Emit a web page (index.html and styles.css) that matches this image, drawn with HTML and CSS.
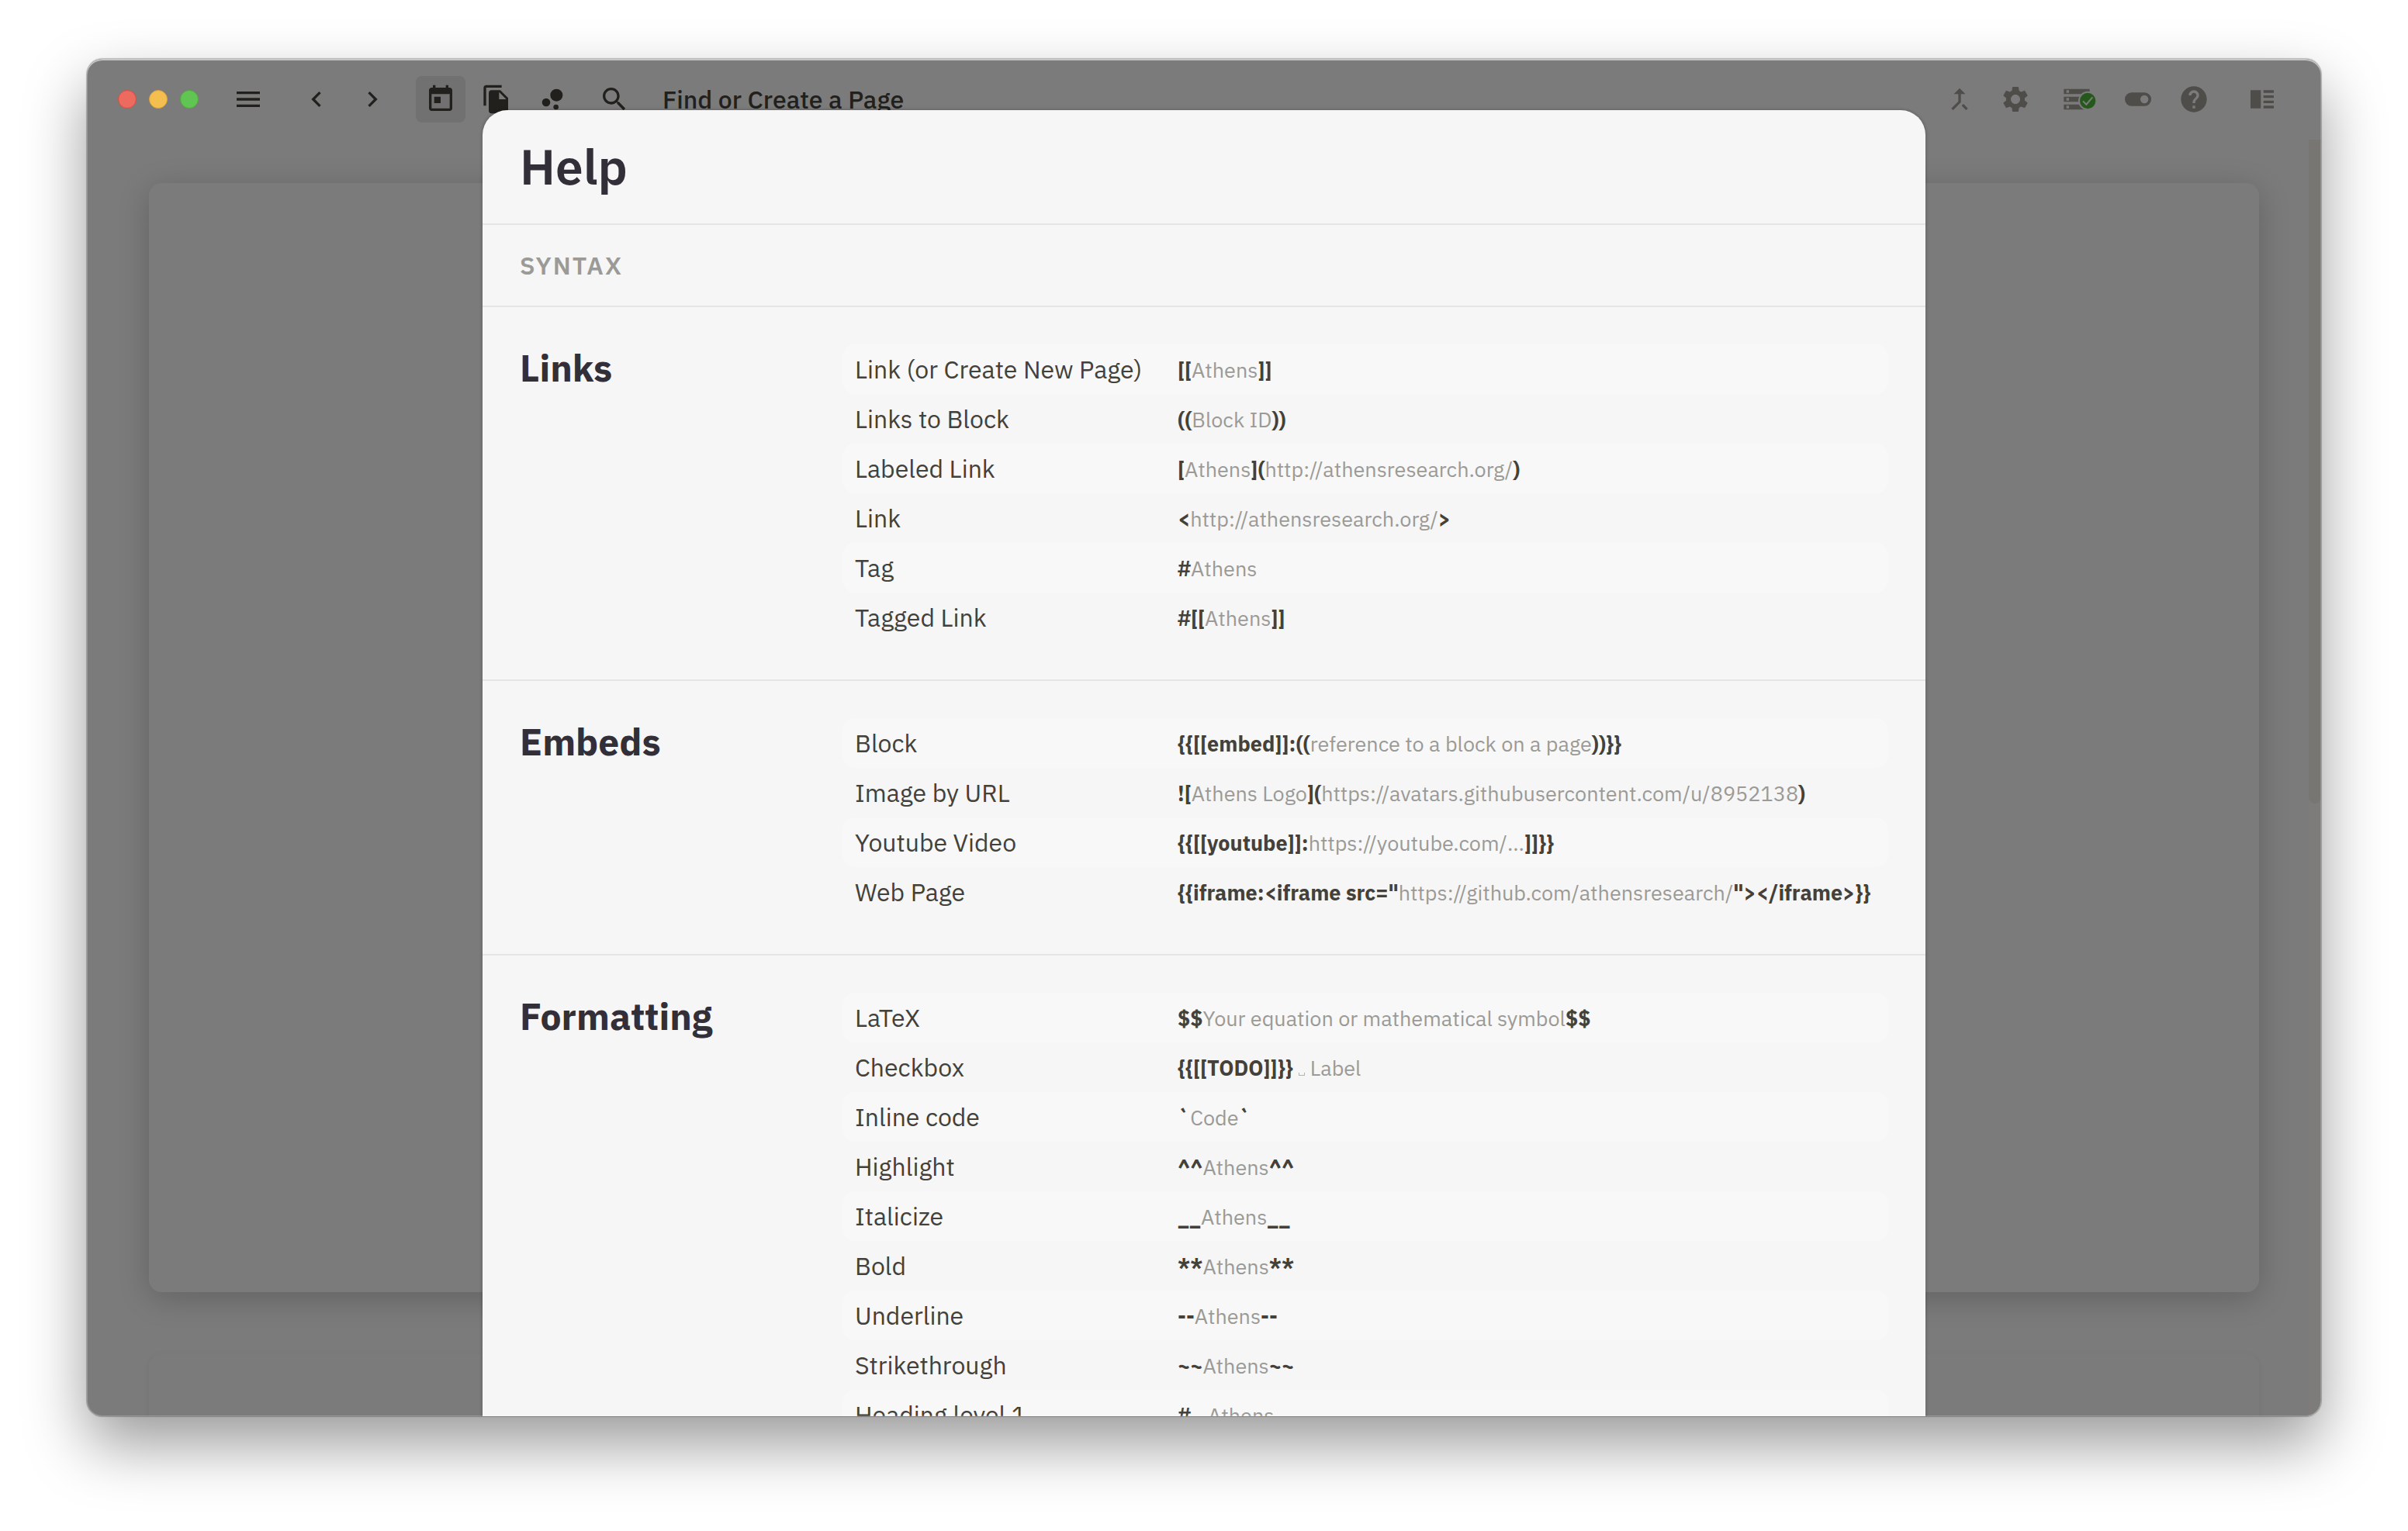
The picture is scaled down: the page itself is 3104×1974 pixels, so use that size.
FILE: index.html
```html
<!DOCTYPE html>
<html lang="en">
<head>
<meta charset="utf-8">
<title>Athens</title>
<link rel="stylesheet" href="styles.css">
</head>
<body>
<div class="window">
  <header class="toolbar">
    <div class="lights">
      <button class="light light-close" aria-label="Close"></button>
      <button class="light light-minimize" aria-label="Minimize"></button>
      <button class="light light-zoom" aria-label="Zoom"></button>
    </div>
    <div class="group">
      <button class="tool" aria-label="Menu"><svg class="icon" viewBox="0 0 24 24"><path d="M3 18h18v-2H3v2zm0-5h18v-2H3v2zm0-7v2h18V6H3z"/></svg></button>
    </div>
    <div class="group">
      <button class="tool" aria-label="Back"><svg class="icon" viewBox="0 0 24 24"><path d="M15.41 7.41 14 6l-6 6 6 6 1.41-1.41L10.83 12z"/></svg></button>
      <button class="tool" aria-label="Forward"><svg class="icon" viewBox="0 0 24 24"><path d="M10 6 8.59 7.41 13.17 12l-4.58 4.59L10 18l6-6z"/></svg></button>
    </div>
    <div class="group">
      <button class="tool tool-active" aria-label="Daily notes"><svg class="icon" viewBox="0 0 24 24"><path d="M19 3h-1V1h-2v2H8V1H6v2H5c-1.11 0-1.99.9-1.99 2L3 19c0 1.1.89 2 2 2h14c1.1 0 2-.9 2-2V5c0-1.1-.9-2-2-2zm0 16H5V8h14v11zM7 10h5v5H7z"/></svg></button>
      <button class="tool" aria-label="All pages"><svg class="icon" viewBox="0 0 24 24"><path d="M16 1H4c-1.1 0-2 .9-2 2v14h2V3h12V1zm-1 4 6 6v10c0 1.1-.9 2-2 2H7.99C6.89 23 6 22.1 6 21l.01-14c0-1.1.89-2 1.99-2h7zm-1 7h5.500L14 6.500V12z"/></svg></button>
      <button class="tool" aria-label="Graph"><svg class="icon" viewBox="0 0 24 24"><circle cx="7.2" cy="14.4" r="3.2"/><circle cx="14.800" cy="18" r="2"/><circle cx="15.200" cy="8.800" r="4.800"/></svg></button>
      <button class="tool tool-search"><svg class="icon" viewBox="0 0 24 24"><path d="M15.500 14h-.79l-.28-.27C15.410 12.590 16 11.110 16 9.500 16 5.910 13.090 3 9.500 3S3 5.910 3 9.500 5.910 16 9.500 16c1.610 0 3.090-.59 4.230-1.570l.27.28v.79l5 4.990L20.490 19l-4.990-5zm-6 0C7.010 14 5 11.990 5 9.500S7.010 5 9.500 5 14 7.010 14 9.500 11.990 14 9.500 14z"/></svg><span>Find or Create a Page</span></button>
    </div>
    <div class="group group-right">
      <button class="tool" aria-label="Merge"><svg class="icon" viewBox="0 0 24 24"><path d="M17 20.410 18.410 19 15 15.590 13.590 17 17 20.410zM7.500 8H11v5.590L5.590 19 7 20.410l6-6V8h3.500L12 3.500 7.500 8z"/></svg></button>
      <button class="tool" aria-label="Settings"><svg class="icon" viewBox="0 0 24 24"><path d="M19.140 12.940c.04-.3.060-.61.060-.94 0-.32-.02-.64-.07-.94l2.030-1.580c.18-.14.230-.41.120-.61l-1.920-3.320c-.12-.22-.37-.29-.59-.22l-2.390.96c-.5-.38-1.030-.7-1.620-.94l-.36-2.540c-.04-.24-.24-.41-.48-.41h-3.840c-.24 0-.43.170-.47.410l-.36 2.540c-.59.240-1.130.570-1.620.940l-2.390-.96c-.22-.08-.47 0-.59.220L2.740 8.870c-.12.210-.08.470.120.610l2.030 1.580c-.05.300-.09.630-.09.940s.02.640.070.940l-2.030 1.580c-.18.140-.23.410-.12.610l1.920 3.320c.12.220.37.290.59.220l2.390-.96c.5.380 1.030.7 1.620.940l.36 2.540c.05.240.24.410.48.410h3.840c.24 0 .44-.17.470-.41l.36-2.540c.59-.24 1.130-.56 1.620-.94l2.390.96c.22.080.47 0 .59-.22l1.920-3.320c.12-.22.070-.47-.12-.61l-2.010-1.580zM12 15.600c-1.980 0-3.600-1.620-3.600-3.600s1.620-3.600 3.600-3.600 3.600 1.620 3.600 3.600-1.620 3.600-3.600 3.600z"/></svg></button>
      <button class="tool tool-sync" aria-label="Database, synced"><svg class="icon icon-wide" viewBox="0 0 27 24"><path d="M2 20h20v-4H2v4zm2-3h2v2H4v-2zM2 4v4h20V4H2zm4 3H4V5h2v2zm-4 7h20v-4H2v4zm2-3h2v2H4v-2z"/><circle class="sync-dot" cx="20.500" cy="13.200" r="6.700"/><path class="sync-tick" d="m16.800 13.400 2.600 2.600 4.800-5.600"/></svg></button>
      <button class="tool" aria-label="Theme"><svg class="icon" viewBox="0 0 24 24"><path fill-rule="evenodd" d="M7 6.800h10a5.200 5.200 0 0 1 0 10.400H7A5.200 5.200 0 0 1 7 6.800zm9.900 2.100a3.100 3.100 0 1 0 0 6.200 3.100 3.100 0 0 0 0-6.200z"/></svg></button>
      <button class="tool" aria-label="Help"><svg class="icon" viewBox="0 0 24 24"><path d="M12 2C6.480 2 2 6.480 2 12s4.480 10 10 10 10-4.480 10-10S17.520 2 12 2zm1 17h-2v-2h2v2zm2.070-7.750-.9.920C13.450 12.900 13 13.500 13 15h-2v-.5c0-1.100.45-2.100 1.170-2.830l1.240-1.260c.37-.36.590-.86.590-1.410 0-1.100-.9-2-2-2s-2 .9-2 2H8c0-2.210 1.790-4 4-4s4 1.790 4 4c0 .88-.36 1.680-.93 2.250z"/></svg></button>
      <button class="tool tool-split" aria-label="Right sidebar"><svg class="icon" viewBox="0 0 24 24"><path d="M13 15h8v-2h-8v2zm0 4h8v-2h-8v2zm0-8h8V9h-8v2zm0-6v2h8V5h-8zM3 5h8v14H3V5z"/></svg></button>
    </div>
  </header>
  <main class="notes">
    <article class="note note-today"></article>
    <article class="note note-previous"></article>
    <div class="scroll-track"><div class="scroll-thumb"></div></div>
  </main>

  <div class="backdrop">
    <section class="modal" role="dialog" aria-labelledby="help-title">
      <header class="modal-header"><h1 id="help-title">Help</h1></header>
      <h2 class="modal-group">Syntax</h2>
      <section class="topic">
        <h3>Links</h3>
        <table>
          <tr><th scope="row">Link (or Create New Page)</th><td><b>[[</b>Athens<b>]]</b></td></tr>
          <tr><th scope="row">Links to Block</th><td><b>((</b>Block ID<b>))</b></td></tr>
          <tr><th scope="row">Labeled Link</th><td><b>[</b>Athens<b>](</b>http://athensresearch.org/<b>)</b></td></tr>
          <tr><th scope="row">Link</th><td><b>&lt;</b>http://athensresearch.org/<b>&gt;</b></td></tr>
          <tr><th scope="row">Tag</th><td><b>#</b>Athens</td></tr>
          <tr><th scope="row">Tagged Link</th><td><b>#[[</b>Athens<b>]]</b></td></tr>
        </table>
      </section>
      <section class="topic">
        <h3>Embeds</h3>
        <table>
          <tr><th scope="row">Block</th><td><b>{{[[embed]]:((</b>reference to a block on a page<b>))}}</b></td></tr>
          <tr><th scope="row">Image by URL</th><td><b>![</b>Athens Logo<b>](</b>https://avatars.githubusercontent.com/u/8952138<b>)</b></td></tr>
          <tr><th scope="row">Youtube Video</th><td><b>{{[[youtube]]:</b>https://youtube.com/...<b>]]}}</b></td></tr>
          <tr><th scope="row">Web Page</th><td><b>{{iframe:&lt;iframe src="</b>https://github.com/athensresearch/<b>"&gt;&lt;/iframe&gt;}}</b></td></tr>
        </table>
      </section>
      <section class="topic">
        <h3>Formatting</h3>
        <table>
          <tr><th scope="row">LaTeX</th><td><b>$$</b>Your equation or mathematical symbol<b>$$</b></td></tr>
          <tr><th scope="row">Checkbox</th><td><b>{{[[TODO]]}}</b><i class="space"></i>Label</td></tr>
          <tr><th scope="row">Inline code</th><td><b>`</b>Code<b>`</b></td></tr>
          <tr><th scope="row">Highlight</th><td><b>^^</b>Athens<b>^^</b></td></tr>
          <tr><th scope="row">Italicize</th><td><b>__</b>Athens<b>__</b></td></tr>
          <tr><th scope="row">Bold</th><td><b>**</b>Athens<b>**</b></td></tr>
          <tr><th scope="row">Underline</th><td><b>--</b>Athens<b>--</b></td></tr>
          <tr><th scope="row">Strikethrough</th><td><b>~~</b>Athens<b>~~</b></td></tr>
          <tr><th scope="row">Heading level 1</th><td><b>#</b><i class="space"></i>Athens</td></tr>
        </table>
      </section>
    </section>
  </div>
</div>
</body>
</html>
```
FILE: styles.css
```css
* { box-sizing: border-box; }

body {
  margin: 0;
  padding: 76px 112px 148px;
  height: 100vh;
  background: #fff;
  color: #43413a;
  font-family: "IBM Plex Sans", Roboto, "Noto Sans", sans-serif;
  font-size: 32px;
}

h1, h2, h3 { margin: 0; }

button {
  border: 0;
  padding: 0;
  background: none;
  color: inherit;
  font: inherit;
}

.window {
  position: relative;
  display: flex;
  flex-direction: column;
  height: 100%;
  overflow: hidden;
  border-radius: 20px;
  background: #f6f6f6;
  box-shadow: 0 0 1px 1px rgba(0, 0, 0, .25), 0 36px 80px rgba(0, 0, 0, .4);
}

/* thin highlight round the window edge */
.window::after {
  content: "";
  position: absolute;
  inset: 0;
  z-index: 3;
  border-radius: inherit;
  box-shadow: inset 0 2px 0 rgba(255, 255, 255, .5), inset 0 0 0 1px rgba(255, 255, 255, .2);
  pointer-events: none;
}

.toolbar {
  display: flex;
  align-items: center;
  gap: 24px;
  height: 104px;
  flex: none;
  padding: 0 44px 0 40px;
}

.lights {
  position: relative;
  z-index: 2;
  display: flex;
  gap: 16px;
  margin-right: 8px;
}

.light {
  width: 24px;
  height: 24px;
  border: 1px solid #d24e42;
  border-radius: 50%;
  background: #ed6a5e;
}
.light-minimize { border-color: #d8a03c; background: #f5bf4f; }
.light-zoom { border-color: #54a73f; background: #61c554; }

.group { display: flex; align-items: center; gap: 8px; }
.group-right { margin-left: auto; color: #9d9a94; }

.tool {
  display: flex;
  align-items: center;
  justify-content: center;
  min-width: 64px;
  height: 60px;
  border-radius: 8px;
}
.tool-active { background: #e2e2e2; }
.tool-search { gap: 42px; padding-left: 20px; font-weight: 500; white-space: nowrap; }
.tool-sync { width: 78px; }
.tool-split { margin-left: 16px; }

.icon { width: 40px; height: 40px; fill: currentColor; }
.icon-wide { width: 45px; margin-left: 5px; }
.sync-dot { fill: #4bb036; stroke: #f6f6f6; stroke-width: 1.2; }
.sync-tick { fill: none; stroke: #f6f6f6; stroke-width: 1.2; }

.notes {
  position: relative;
  flex: 1;
  min-height: 0;
  padding: 56px 80px 0;
  overflow: hidden;
}

.note { border-radius: 16px; background: #f6f6f6; }
.note-today {
  height: calc(100% - 160px);
  margin-bottom: 80px;
  box-shadow: 0 8px 40px rgba(0, 0, 0, .2);
}
.note-previous { height: 100%; box-shadow: 0 2px 8px rgba(0, 0, 0, .06); }

.scroll-track {
  position: absolute;
  top: 0;
  bottom: 0;
  right: 0;
  width: 16px;
  background: #faf8f4;
}
.scroll-thumb {
  height: 52%;
  border-radius: 0 0 8px 8px;
  background: #eeece6;
}

.backdrop {
  position: absolute;
  inset: 0;
  z-index: 1;
  padding-top: 66px;
  overflow: hidden;
  background: rgba(0, 0, 0, .5);
}

.modal {
  max-width: 1860px;
  margin: 0 auto;
  border-radius: 32px;
  background: #f6f6f6;
  box-shadow: 0 0 4px rgba(0, 0, 0, .3);
}

.modal-header,
.modal-group,
.topic {
  padding: 0 48px;
  border-bottom: 2px solid #e5e5e5;
}

.modal-header { padding-bottom: 2px; }

.modal-header h1 {
  color: #322f38;
  font-size: 64px;
  font-weight: 600;
  line-height: 144px;
}

.modal-group {
  color: #9b9a96;
  font-size: 32px;
  font-weight: 600;
  line-height: 104px;
  letter-spacing: 2px;
  text-transform: uppercase;
}

.topic {
  display: grid;
  grid-template-columns: 416px 1fr;
  padding-top: 48px;
  padding-bottom: 48px;
}

.topic h3 {
  color: #322f38;
  font-size: 48px;
  font-weight: 700;
  line-height: 60px;
}

table { width: 100%; border-collapse: collapse; table-layout: fixed; }
tr:nth-child(odd) > * { background: #f8f8f8; }

th, td { height: 64px; padding: 0; text-align: left; white-space: nowrap; }
th {
  width: 432px;
  padding-left: 16px;
  border-radius: 16px 0 0 16px;
  font-weight: 400;
}
td {
  border-radius: 0 16px 16px 0;
  color: #9b9a96;
  font-size: 27px;
}
td b { color: #43413a; font-weight: 700; }

/* visible mark for a required space */
.space {
  display: inline-block;
  width: 8px;
  height: 4px;
  margin: 0 7px;
  border: 1px solid #b4b3af;
  border-top: 0;
}
```
